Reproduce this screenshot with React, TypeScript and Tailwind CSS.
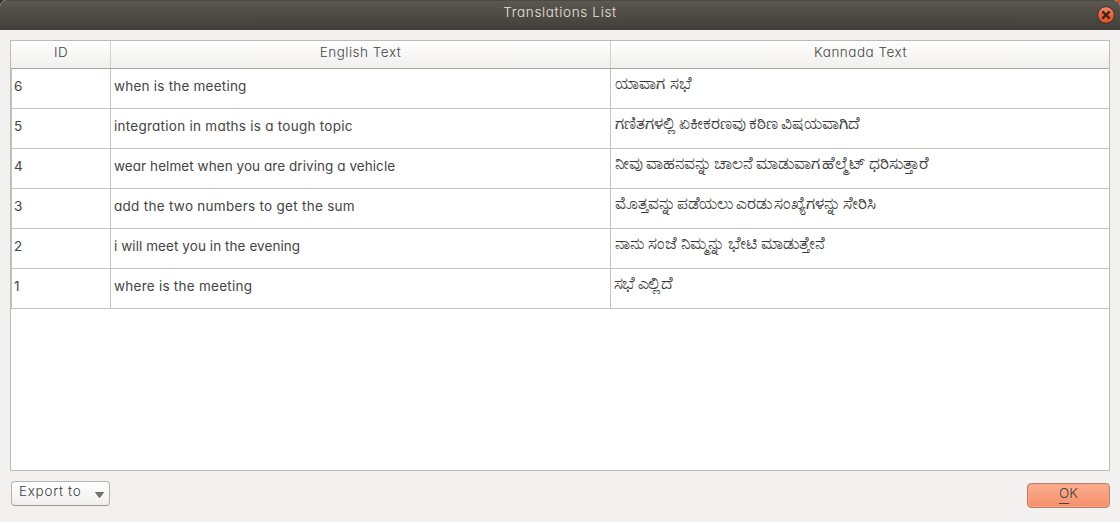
const rows = [
  { id: '6', en: 'when is the meeting', enFit: 'tracking-[0.22px]', kn: 'ಯಾವಾಗ ಸಭೆ', knFit: '' },
  { id: '5', en: 'integration in maths is a tough topic', enFit: 'tracking-[0.26px]', kn: 'ಗಣಿತಗಳಲ್ಲಿ ಏಕೀಕರಣವು ಕಠಿಣ ವಿಷಯವಾಗಿದೆ', knFit: '[word-spacing:-1.8px]' },
  { id: '4', en: 'wear helmet when you are driving a vehicle', enFit: 'tracking-[0.06px]', kn: 'ನೀವು ವಾಹನವನ್ನು ಚಾಲನೆ ಮಾಡುವಾಗ ಹೆಲ್ಮೆಟ್ ಧರಿಸುತ್ತಾರೆ', knFit: '[word-spacing:-1.8px]' },
  { id: '3', en: 'add the two numbers to get the sum', enFit: 'tracking-[0.28px]', kn: 'ಮೊತ್ತವನ್ನು ಪಡೆಯಲು ಎರಡು ಸಂಖ್ಯೆಗಳನ್ನು ಸೇರಿಸಿ', knFit: '[word-spacing:-2.2px]' },
  { id: '2', en: 'i will meet you in the evening', enFit: 'tracking-[0.07px]', kn: 'ನಾನು ಸಂಜೆ ನಿಮ್ಮನ್ನು ಭೇಟಿ ಮಾಡುತ್ತೇನೆ', knFit: '[word-spacing:-0.7px]' },
  { id: '1', en: 'where is the meeting', enFit: 'tracking-[0.25px]', kn: 'ಸಭೆ ಎಲ್ಲಿದೆ', knFit: '-ml-px tracking-[-0.6px] [word-spacing:-1px]' },
];

function TitleBar() {
  return (
    <header className="relative h-[30px] shrink-0 rounded-t-[6px] border-t border-[#4b4943] bg-linear-to-b from-[#5b5850] to-[#3f3e39] text-center">
      <h1 className="text-[13.5px] leading-[23px] font-light tracking-[0.65px] text-[#e6e2da]">Translations List</h1>
      <button aria-label="Close" className="absolute right-[5px] top-[5px] size-[18px]">
        <svg viewBox="0 0 18 18" className="block size-[18px]">
          <defs>
            <linearGradient id="closeFill" x1="0" y1="0" x2="0" y2="1">
              <stop offset="0" stopColor="#f58a6a" />
              <stop offset="0.5" stopColor="#ee6238" />
              <stop offset="1" stopColor="#e2501f" />
            </linearGradient>
          </defs>
          <circle cx="9" cy="9" r="8.3" fill="url(#closeFill)" stroke="#3a332c" strokeWidth="1" />
          <path d="M5.3 5.3 L12.7 12.7 M12.7 5.3 L5.3 12.7" stroke="#3b2a17" strokeWidth="2.4" />
        </svg>
      </button>
    </header>
  );
}

export default function App() {
  return (
    <div className="bg-linear-to-r from-[#3c2a2a] to-[#dd4814]">
      <div className="flex h-[522px] w-[1120px] flex-col overflow-hidden rounded-t-[6px] bg-[#f2f1f0] font-['Inter','Noto_Sans',sans-serif] text-[13.5px] text-[#444444] [font-feature-settings:'cv11']">
        <TitleBar />
        <main className="mx-[10px] mt-[10px] h-[431px] shrink-0 border border-[#bcbab8] bg-white">
          <div className="grid h-[28px] grid-cols-[100px_500px_1fr] border-b border-[#a9a7a5] bg-linear-to-b from-white to-[#f0efee] text-center leading-[23px] font-light tracking-[0.5px]">
            <div className="border-r border-[#d3d1cf] pl-px">ID</div>
            <div className="border-r border-[#d3d1cf]">English Text</div>
            <div className="pl-px">Kannada Text</div>
          </div>
          {rows.map((row) => (
            <div key={row.id} className="grid h-[40px] grid-cols-[100px_500px_1fr] border-b border-[#c4c3c2] text-[#444444]">
              <div className="border-x border-[#c4c3c2] pl-[2px] leading-[35px]">{row.id}</div>
              <div className="overflow-hidden border-r border-[#c4c3c2] pl-[3px] leading-[35px] whitespace-nowrap">
                <span className={row.enFit}>{row.en}</span>
              </div>
              <div className="overflow-hidden pl-[4px] text-[16.5px] leading-[29px] text-[#383838] whitespace-nowrap [-webkit-text-stroke:0.15px_#383838]">
                <span className={row.knFit}>{row.kn}</span>
              </div>
            </div>
          ))}
        </main>
        <footer className="flex items-start justify-between px-[10px] pt-[10px]">
          <button className="ml-px flex h-[25px] w-[99px] items-start justify-between rounded-[4px] border border-[#b5b3b1] border-b-[#9c9a98] bg-linear-to-b from-white to-[#f0efee] pl-[7px] pr-[5px] leading-[19px]">
            <span className="font-light tracking-[0.7px]">Export to</span>
            <svg viewBox="0 0 9 6" className="mt-[10px] h-[6px] w-[9px]">
              <path d="M0.5 0.5 H8.5 L4.5 5.7 Z" fill="#777" stroke="#5c5c5c" strokeWidth="0.8" />
            </svg>
          </button>
          <button className="mt-[2px] flex h-[25px] w-[83px] items-start justify-center rounded-[4px] border border-[#b98069] bg-linear-to-b from-[#fcae8f] to-[#f58e69] leading-[19px] font-light shadow-[inset_0_0_0_1px_#f9a486]">
            <span className="underline underline-offset-[5px] decoration-1">O</span>
            <span>K</span>
          </button>
        </footer>
      </div>
    </div>
  );
}
